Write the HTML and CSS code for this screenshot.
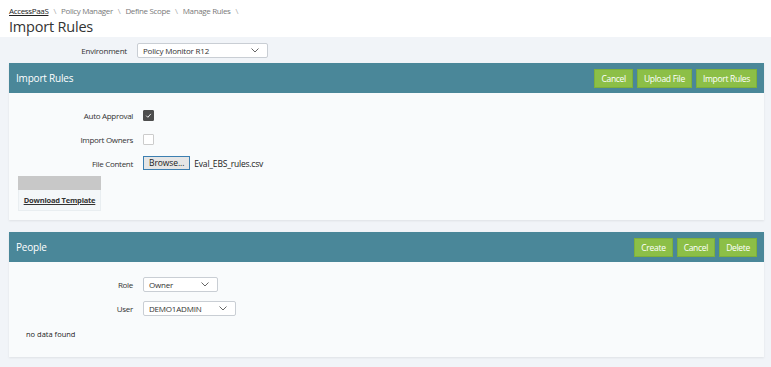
FILE: index.html
```html
<!DOCTYPE html>
<html>
<head>
<meta charset="utf-8">
<link rel="stylesheet" href="styles.css">
</head>
<body>
<div class="top">
  <div class="crumbs">
    <a class="crumb-home">AccessPaaS</a><span class="sep">\</span><span>Policy Manager</span><span class="sep">\</span><span>Define Scope</span><span class="sep">\</span><span>Manage Rules</span><span class="sep">\</span>
  </div>
  <h1 class="title">Import Rules</h1>
</div>
<div class="env-row">
  <label class="env-label">Environment</label>
  <div class="select env-select"><span>Policy Monitor R12</span><svg class="chev" viewBox="0 0 8 5" width="8" height="5"><path d="M0.5 0.5 L4 4 L7.5 0.5" fill="none" stroke="#666" stroke-width="1"/></svg></div>
</div>

<section class="panel">
  <div class="panel-head">
    <h2>Import Rules</h2>
    <div class="btns">
      <button class="btn">Cancel</button>
      <button class="btn">Upload File</button>
      <button class="btn">Import Rules</button>
    </div>
  </div>
  <div class="panel-body body1">
    <div class="frow"><label>Auto Approval</label><span class="cb checked"><svg viewBox="0 0 10 10" width="10" height="10"><path d="M2.5 5.2 L4.3 7 L7.6 3.2" fill="none" stroke="#fff" stroke-width="1"/></svg></span></div>
    <div class="frow"><label>Import Owners</label><span class="cb"></span></div>
    <div class="frow"><label>File Content</label><span class="browse">Browse...</span><span class="fname">Eval_EBS_rules.csv</span></div>
    <div class="tmpl">
      <div class="tmpl-bar"></div>
      <div class="tmpl-link"><a>Download Template</a></div>
    </div>
  </div>
</section>

<section class="panel panel2">
  <div class="panel-head">
    <h2>People</h2>
    <div class="btns">
      <button class="btn">Create</button>
      <button class="btn">Cancel</button>
      <button class="btn">Delete</button>
    </div>
  </div>
  <div class="panel-body body2">
    <div class="frow2"><label>Role</label><div class="select role-select"><span>Owner</span><svg class="chev" viewBox="0 0 8 5" width="8" height="5"><path d="M0.5 0.5 L4 4 L7.5 0.5" fill="none" stroke="#666" stroke-width="1"/></svg></div></div>
    <div class="frow2"><label>User</label><div class="select user-select"><span>DEMO1ADMIN</span><svg class="chev" viewBox="0 0 8 5" width="8" height="5"><path d="M0.5 0.5 L4 4 L7.5 0.5" fill="none" stroke="#666" stroke-width="1"/></svg></div></div>
    <div class="nodata">no data found</div>
  </div>
</section>
</body>
</html>
```
FILE: styles.css
```css
html, body { margin: 0; padding: 0; }
body {
  background: #f1f4f8;
  font-family: "Open Sans", "Noto Sans", sans-serif;
  color: #333;
  width: 771px;
  height: 367px;
  overflow: hidden;
}
.top {
  background: #fff;
  padding: 5px 9px 0;
  height: 32px;
}
.crumbs {
  font-size: 8px;
  color: #777;
  line-height: 12px;
  letter-spacing: -0.35px;
}
.crumbs span { color: #7a7a7a; }
.crumb-home { color: #222; text-decoration: underline; }
.sep { margin: 0 5px; color: #aaa !important; }
.title {
  margin: 2px 0 0;
  font-size: 14.5px;
  font-weight: 400;
  color: #333;
  line-height: 16px;
  letter-spacing: -0.2px;
}
.env-row {
  display: flex;
  align-items: center;
  height: 26px;
  padding-left: 72px;
}
.env-label {
  font-size: 8px;
  color: #333;
  width: 55px;
  text-align: right;
  margin-right: 10px;
  letter-spacing: -0.2px;
}
.select {
  display: flex;
  align-items: center;
  justify-content: space-between;
  background: #fff;
  border: 1px solid #c9ced4;
  border-radius: 2px;
  height: 13px;
  padding: 0 8px 0 5px;
  font-size: 8px;
  color: #333;
  letter-spacing: -0.2px;
}
.env-select { width: 116px; }
.chev { display: block; }

.panel {
  margin: 0 7px 0 9px;
  background: #f9fbfc;
  box-shadow: 0 1px 2px rgba(0,0,0,0.08);
}
.panel2 { margin-top: 12px; }
.panel-head {
  background: #4a8799;
  height: 30px;
  display: flex;
  align-items: center;
  justify-content: space-between;
  padding: 0 7px 0 7px;
}
.panel-head h2 {
  margin: 0;
  font-size: 10px;
  font-weight: 400;
  color: #fff;
  letter-spacing: -0.2px;
}
.btns { display: flex; gap: 4px; }
.btn {
  background: #8cbf47;
  border: 1px solid #7eb03c;
  color: #fff;
  font-family: inherit;
  font-size: 8.5px;
  height: 19px;
  padding: 0 6px;
  letter-spacing: -0.3px;
  cursor: pointer;
}
.body1 { height: 127px; padding-top: 10px; box-sizing: border-box; }
.frow {
  display: flex;
  align-items: center;
  height: 24px;
}
.frow label, .frow2 label {
  width: 124px;
  text-align: right;
  font-size: 8px;
  color: #333;
  margin-right: 10px;
  letter-spacing: -0.3px;
}
.cb {
  width: 9px;
  height: 9px;
  border: 1px solid #ccc;
  background: #fff;
  border-radius: 1px;
  display: flex;
  align-items: center;
  justify-content: center;
}
.cb.checked { background: #4d4d4d; border-color: #4d4d4d; }
.cb svg { width: 9px; height: 9px; }
.browse {
  font-size: 8.5px;
  color: #222;
  background: #e6e6e6;
  border: 1px solid #3c7fb1;
  height: 12px;
  line-height: 12px;
  padding: 0 5px;
  letter-spacing: -0.1px;
}
.fname {
  margin-left: 4px;
  font-size: 8.5px;
  color: #222;
  letter-spacing: -0.2px;
}
.tmpl {
  margin: 1px 0 0 9px;
  width: 83px;
}
.tmpl-bar { height: 14px; background: #c8c8c8; }
.tmpl-link {
  height: 21px;
  background: #f4f7f9;
  border: 1px solid #e9eef1;
  border-top: none;
  display: flex;
  align-items: center;
  justify-content: center;
  box-sizing: border-box;
}
.tmpl-link a {
  font-size: 7.5px;
  font-weight: 700;
  color: #333;
  text-decoration: underline;
  letter-spacing: -0.2px;
}
.body2 { height: 95px; padding-top: 10px; box-sizing: border-box; }
.frow2 { display: flex; align-items: center; height: 24px; }
.role-select { width: 60px; }
.user-select { width: 78px; }
.nodata {
  font-size: 7.5px;
  color: #222;
  margin: 9px 0 0 17px;
}
```
